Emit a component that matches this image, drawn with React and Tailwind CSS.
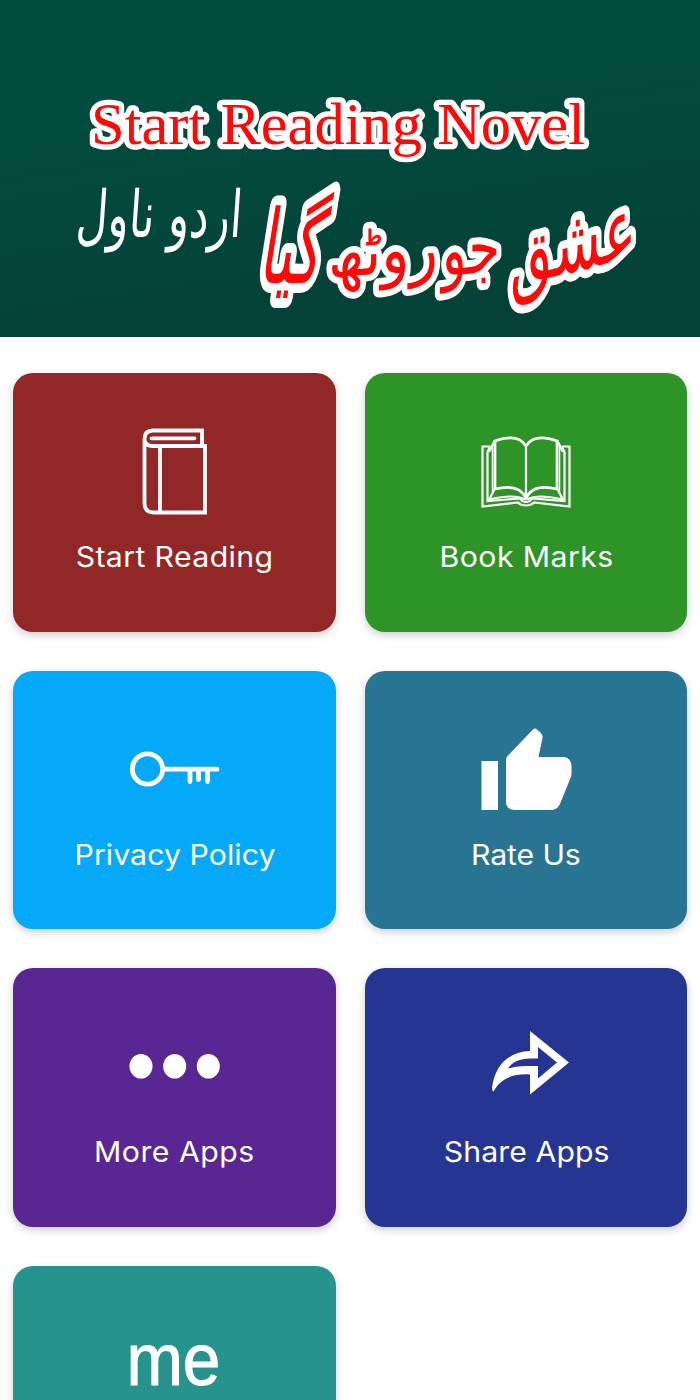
const ink = { fill: "none", stroke: "white", strokeLinejoin: "round", strokeLinecap: "round" };

function BookIcon() {
  return (
    <svg width="90" height="90" viewBox="0 0 90 90" {...ink} strokeWidth="3.8" strokeLinejoin="miter">
      <path d="M72 19V3.500H23Q14.5 3.500 14.5 12Q14.5 19 23 19H75V85.500H24Q14.500 85.500 14.500 76V12" />
      <path d="M21.500 11.300H64.500M30 19V85" strokeWidth="3.8" />
    </svg>
  );
}

function OpenBookIcon() {
  return (
    <svg width="90" height="90" viewBox="0 0 90 90" {...ink} strokeWidth="2.200" strokeLinejoin="miter">
      <g transform="translate(0 6)">
        <path d="M8.500 13.500H1.500V73.500L37 69.500Q40 72.500 45 72.500Q50 72.500 53 69.500L88.500 73.500V13.500H81.500" />
        <path d="M8.500 15L6.500 19V68L39 65.500Q41 69 45 69Q49 69 51 65.500L83.500 68V19L81.500 15" />
        <path d="M14 8Q37 0 45 13Q53 0 76 8V56Q52 50 45 65Q38 50 14 56Z" strokeWidth="2.700" />
        <path d="M45 13V65M13.500 8L8.500 18M76.500 8L81.500 18M10 66Q34 61 43 66M80 66Q56 61 47 66M13 57L8 67M77 57L82 67" />
        <path d="M11.500 12V58M78.500 12V58" strokeWidth="1.500" />
      </g>
    </svg>
  );
}

function KeyIcon() {
  return (
    <svg width="90" height="90" viewBox="0 0 90 90" {...ink} strokeWidth="4.800">
      <circle cx="17.500" cy="44" r="15.200" />
      <path d="M34 44.200H87M60 45V56.500M68.500 45V54.500M77.500 45V56.500" />
    </svg>
  );
}

function ThumbIcon() {
  return (
    <svg width="90" height="90" viewBox="0 0 90 90" fill="white" className="overflow-visible">
      <path d="M.500 36H17V85H.500ZM25 35Q25 32.500 26.500 31L52 4.500Q54.500 2 57 5.500Q62 9 61.500 13L57.500 32H83Q90.500 33 90.500 42V48Q90.500 51 89.500 53L79 79Q76 85 70 85H33Q25 84 25 77Z" />
    </svg>
  );
}

function DotsIcon() {
  return (
    <svg width="90" height="90" viewBox="0 0 90 90" fill="white" className="overflow-visible">
      <ellipse cx="11" cy="44.300" rx="11.500" ry="12.300" />
      <ellipse cx="44.700" cy="44.300" rx="11.500" ry="12.300" />
      <ellipse cx="78.300" cy="44.300" rx="11.500" ry="12.300" />
    </svg>
  );
}

function ShareIcon() {
  return (
    <svg width="90" height="90" viewBox="0 0 90 90" fill="white" fillRule="evenodd">
      <path d="M49 9L88 40.500L49 72.500V52.500C34 51.500 20 55.500 12.500 69.500Q11.500 69.500 11 66C14 42 29 29.500 49 29ZM57 25V36.500H49C39 36.500 31 40 27 46.500Q36 43.500 49 44H57V56.500L76 40.500Z" />
    </svg>
  );
}

function MeIcon() {
  return (
    <svg width="90" height="90" viewBox="0 0 90 90" className="overflow-visible">
      <text x="-3.500" y="65" textLength="94" lengthAdjust="spacingAndGlyphs" fontSize="75" fill="white" stroke="white" strokeWidth="1" strokeLinejoin="round" className="font-['Liberation_Sans',sans-serif]">me</text>
    </svg>
  );
}

const tiles = [
  { label: "Start Reading", Icon: BookIcon, color: "bg-[#922727]", tracking: "tracking-[0.35px]" },
  { label: "Book Marks", Icon: OpenBookIcon, color: "bg-[#2e9427]", tracking: "tracking-[0.4px]" },
  { label: "Privacy Policy", Icon: KeyIcon, color: "bg-[#05a9f7]", tracking: "tracking-[0.05px]" },
  { label: "Rate Us", Icon: ThumbIcon, color: "bg-[#277493]", tracking: "tracking-[-0.1px]" },
  { label: "More Apps", Icon: DotsIcon, color: "bg-[#582793]", tracking: "tracking-[0.45px]" },
  { label: "Share Apps", Icon: ShareIcon, color: "bg-[#263592]", tracking: "tracking-[0.05px]" },
  { label: "", Icon: MeIcon, color: "bg-[#27938d]", tracking: "" },
];

function Tile({ label, Icon, color, tracking }) {
  return (
    <button className={`flex h-[258.500px] flex-col items-center rounded-[20px] pt-[54px] pl-px shadow-[0_3px_8px_rgba(0,0,0,0.2)] ${color}`}>
      <Icon />
      <span className={`mt-[22px] scale-x-[1.08] whitespace-nowrap font-['Inter',sans-serif] text-[28px] leading-[36px] text-white ${tracking}`}>{label}</span>
    </button>
  );
}

const words = [
  { text: "عشق", width: 126, transform: "translate(636 256) skewY(-14) scale(1 1.2)" },
  { text: "جو", width: 58, transform: "translate(500 271) skewY(-5)" },
  { text: "روٹھ", width: 110, transform: "translate(438 271) skewY(-3) scale(1 .95)" },
  { text: "گیا", width: 62, transform: "translate(320 283) skewX(-9) scale(1 1.42)" },
];

function Wordmark() {
  return (
    <svg width="700" height="336" viewBox="0 0 700 336" className="block">
      <text x="91" y="144" textLength="494" lengthAdjust="spacingAndGlyphs" fontSize="60" fill="#ff0808" stroke="white" strokeWidth="10.500" strokeLinejoin="round" paintOrder="stroke" className="font-['Liberation_Serif',serif]">Start Reading Novel</text>
      {words.map((w) => (
        <text key={w.text} transform={w.transform} direction="rtl" textLength={w.width} lengthAdjust="spacingAndGlyphs" fontSize="72" fill="#ff0808" stroke="white" strokeWidth="14" strokeLinejoin="round" paintOrder="stroke" className="font-['DejaVu_Sans',sans-serif]">{w.text}</text>
      ))}
      <text transform="translate(241 237) skewX(-4) scale(1 1.08)" direction="rtl" textLength="166" lengthAdjust="spacingAndGlyphs" fontSize="60" fill="white" className="font-['DejaVu_Sans',sans-serif]">اردو ناول</text>
    </svg>
  );
}

export default function App() {
  return (
    <main className="h-[1400px] w-[700px] overflow-hidden bg-white">
      <header className="h-[336.500px] bg-[linear-gradient(172deg,#014d40_20%,#054036_90%)]">
        <Wordmark />
      </header>
      <section className="grid grid-cols-2 gap-x-[29px] gap-y-[39px] px-[13px] pt-[36.500px]">
        {tiles.map((tile, i) => (
          <Tile key={i} {...tile} />
        ))}
      </section>
    </main>
  );
}
